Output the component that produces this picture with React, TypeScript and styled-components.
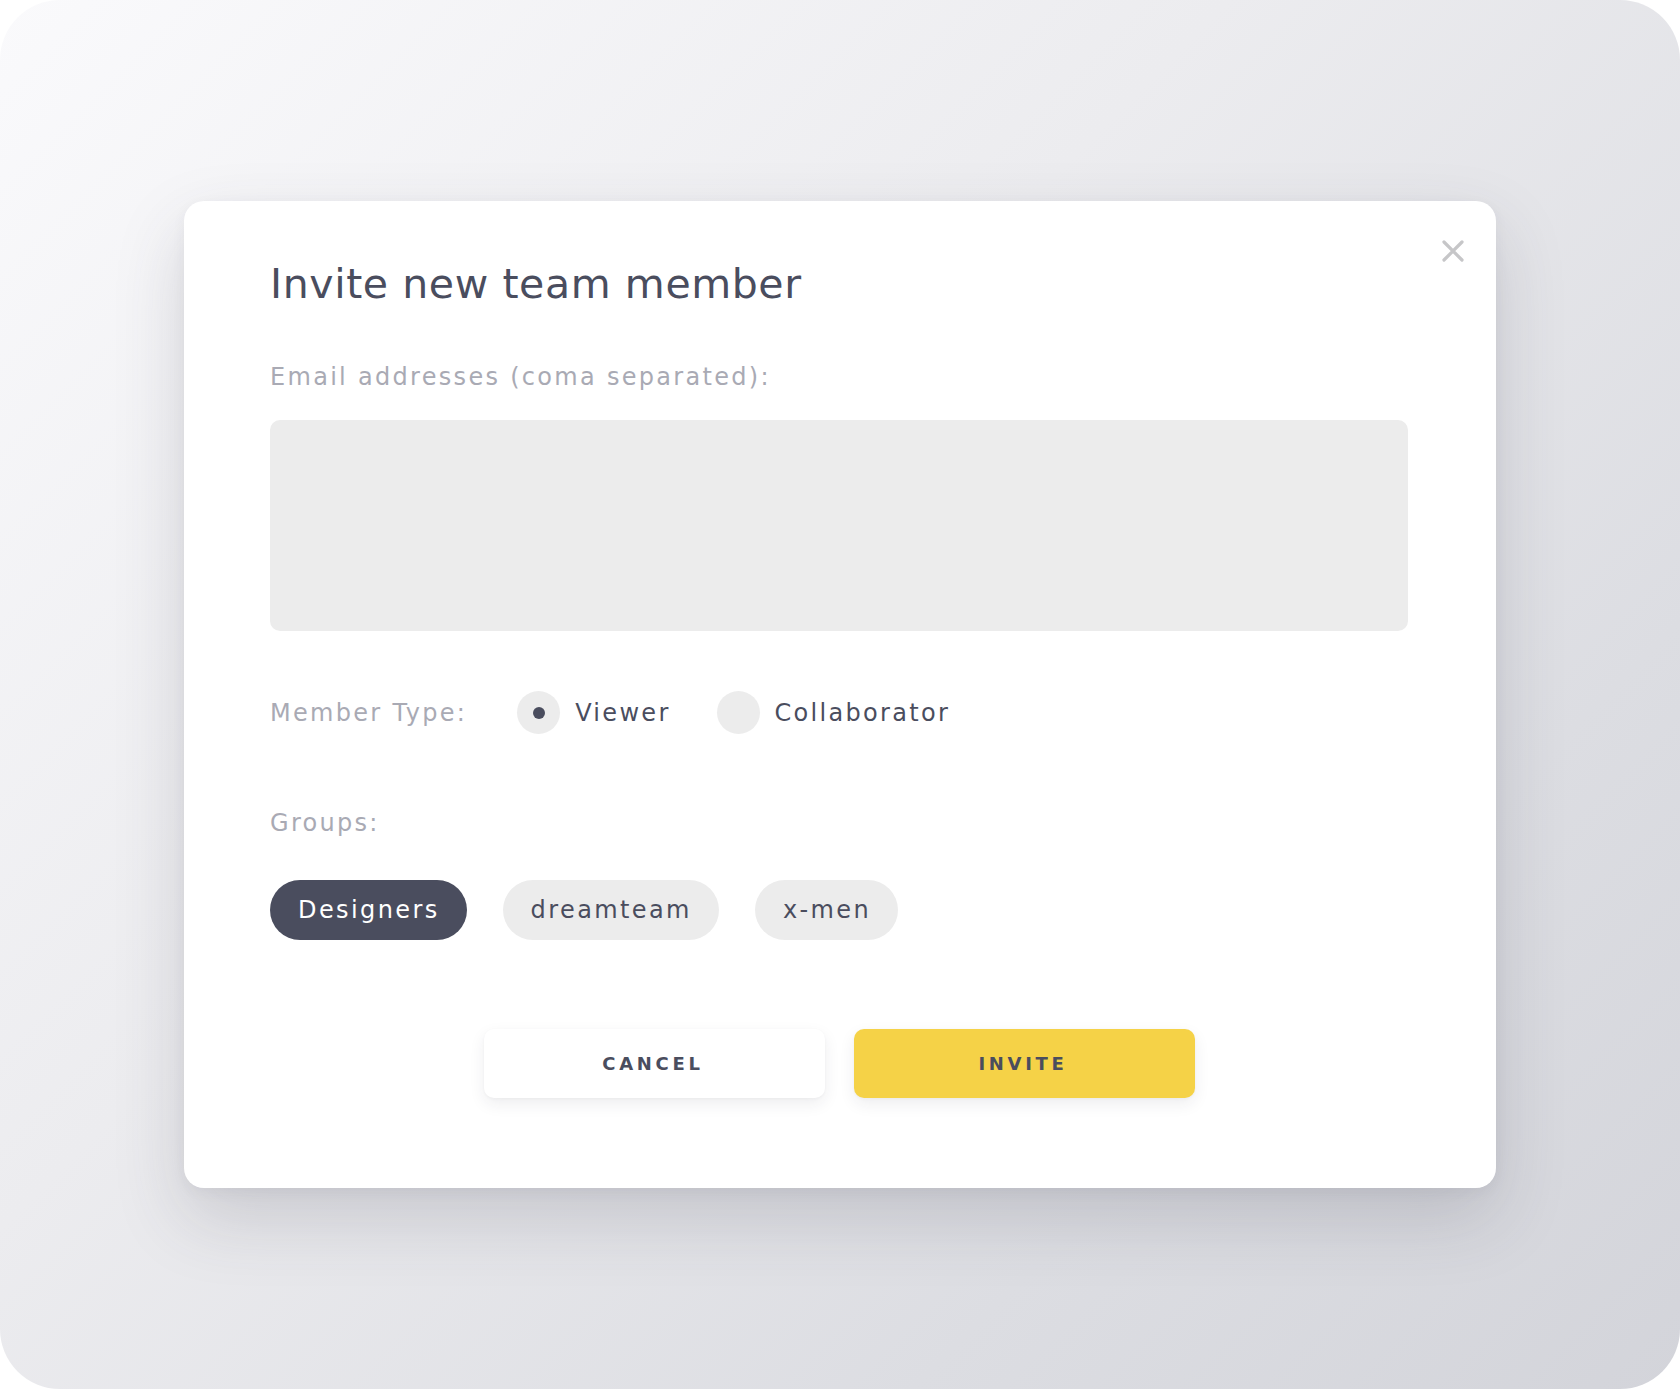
import React from "react";
import styled, { createGlobalStyle } from "styled-components";

const GlobalStyle = createGlobalStyle`
  html, body { margin: 0; padding: 0; background: #ffffff; }
  * { box-sizing: border-box; }
  body { font-family: "DejaVu Sans", "Open Sans", sans-serif; }
`;

const Page = styled.div`
  width: 1680px;
  height: 1389px;
  border-radius: 60px;
  overflow: hidden;
  background: linear-gradient(135deg, #fafafc 0%, #ececef 40%, #dcdde2 75%, #d3d4da 100%);
  display: flex;
  align-items: center;
  justify-content: center;
`;

const Modal = styled.div`
  position: relative;
  width: 1312px;
  height: 987px;
  background: #ffffff;
  border-radius: 20px;
  padding: 58px 88px 0 86px;
  display: flex;
  flex-direction: column;
  box-shadow: 0 30px 70px rgba(60, 62, 80, 0.18), 0 4px 14px rgba(60, 62, 80, 0.05);
`;

const CloseButton = styled.button`
  position: absolute;
  top: 38px;
  right: 31px;
  width: 24px;
  height: 24px;
  padding: 0;
  border: none;
  background: transparent;
  display: flex;
  align-items: center;
  justify-content: center;
  cursor: pointer;
`;

const Title = styled.h1`
  margin: 0;
  font-size: 41px;
  line-height: 50px;
  font-weight: 400;
  color: #4a4d5e;
  letter-spacing: 0.6px;
`;

const Label = styled.div<{ $mt?: number }>`
  margin-top: ${(p) => p.$mt ?? 0}px;
  font-size: 24px;
  line-height: 30px;
  color: #a9aab4;
  letter-spacing: 2.3px;
`;

const EmailBox = styled.textarea`
  margin-top: 28px;
  width: 1138px;
  height: 211px;
  border: none;
  border-radius: 10px;
  background: #ececec;
  resize: none;
  outline: none;
  font-family: inherit;
  font-size: 22px;
  padding: 16px 20px;
`;

const TypeRow = styled.div`
  margin-top: 60px;
  display: flex;
  align-items: center;
  height: 43px;
`;

const RadioGroup = styled.div`
  display: flex;
  align-items: center;
  gap: 46px;
  margin-left: 50px;
`;

const RadioOption = styled.label`
  display: flex;
  align-items: center;
  gap: 15px;
  cursor: pointer;
`;

const RadioCircle = styled.span<{ $checked?: boolean }>`
  width: 43px;
  height: 43px;
  border-radius: 50%;
  background: #ececec;
  display: flex;
  align-items: center;
  justify-content: center;
  &::after {
    content: "";
    width: 12px;
    height: 12px;
    border-radius: 50%;
    background: ${(p) => (p.$checked ? "#4a4d5e" : "transparent")};
  }
`;

const RadioText = styled.span`
  font-size: 24px;
  line-height: 30px;
  color: #4a4d5e;
  letter-spacing: 2.3px;
`;

const Chips = styled.div`
  margin-top: 42px;
  display: flex;
  gap: 36px;
`;

const Chip = styled.button<{ $active?: boolean }>`
  height: 60px;
  padding: 0 27px 0 28px;
  border: none;
  border-radius: 30px;
  background: ${(p) => (p.$active ? "#4a4d5e" : "#ececec")};
  color: ${(p) => (p.$active ? "#ffffff" : "#4a4d5e")};
  font-family: inherit;
  font-size: 24px;
  letter-spacing: 2.4px;
  cursor: pointer;
`;

const Actions = styled.div`
  margin-top: 89px;
  display: flex;
  justify-content: center;
  gap: 29px;
`;

const ActionButton = styled.button<{ $primary?: boolean }>`
  width: 341px;
  height: 69px;
  border: none;
  border-radius: 10px;
  background: ${(p) => (p.$primary ? "#f5d247" : "#ffffff")};
  color: #4a4d5e;
  font-family: inherit;
  font-size: 18px;
  font-weight: 700;
  letter-spacing: 3.7px;
  padding-left: 4px;
  box-shadow: 0 6px 16px rgba(40, 42, 60, 0.08), 0 1px 3px rgba(40, 42, 60, 0.04);
  cursor: pointer;
`;

export default function App() {
  return (
    <>
      <GlobalStyle />
      <Page>
        <Modal>
          <CloseButton aria-label="Close">
            <svg width="22" height="22" viewBox="0 0 22 22">
              <path d="M2 2 L20 20 M20 2 L2 20" stroke="#c6c6c8" strokeWidth="3.2" strokeLinecap="round" />
            </svg>
          </CloseButton>
          <Title>Invite new team member</Title>
          <Label $mt={53}>Email addresses (coma separated):</Label>
          <EmailBox />
          <TypeRow>
            <Label>Member Type:</Label>
            <RadioGroup>
              <RadioOption>
                <RadioCircle $checked />
                <RadioText>Viewer</RadioText>
              </RadioOption>
              <RadioOption>
                <RadioCircle />
                <RadioText>Collaborator</RadioText>
              </RadioOption>
            </RadioGroup>
          </TypeRow>
          <Label $mt={74}>Groups:</Label>
          <Chips>
            <Chip $active>Designers</Chip>
            <Chip>dreamteam</Chip>
            <Chip>x-men</Chip>
          </Chips>
          <Actions>
            <ActionButton>CANCEL</ActionButton>
            <ActionButton $primary>INVITE</ActionButton>
          </Actions>
        </Modal>
      </Page>
    </>
  );
}
